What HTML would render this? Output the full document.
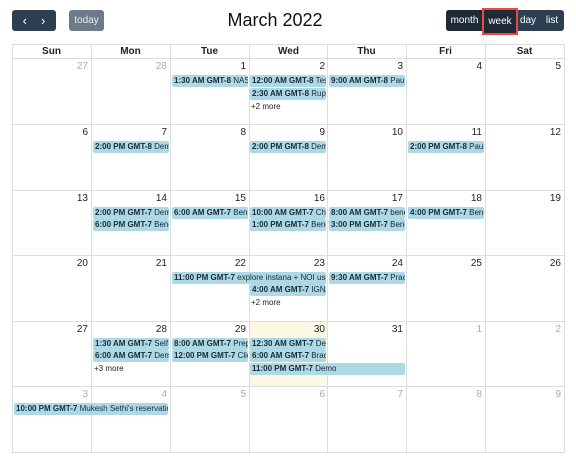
<!DOCTYPE html><html><head><style>
body{margin:0;width:576px;height:464px;background:#fff;font-family:"Liberation Sans",sans-serif;position:relative;overflow:hidden}
.a{position:absolute}
.btn{position:absolute;color:#fff;font-size:10px;display:flex;align-items:center;justify-content:center}
.v{position:absolute;top:44px;width:1px;height:409px;background:#ddd}
.h{position:absolute;left:12px;width:553px;height:1px;background:#ddd}
.hd{position:absolute;top:46px;font-size:10px;font-weight:bold;color:#222;text-align:center;width:79px}
.n{position:absolute;font-size:10px;color:#222;text-align:right;width:74px}
.g{color:#aaa}
.e{position:absolute;height:12px;background:#add8e6;border-radius:2px;font-size:8px;line-height:12px;color:#1a2a33;white-space:nowrap;overflow:hidden;padding-left:2px;box-sizing:border-box}
.e b{font-weight:bold}
.m{position:absolute;font-size:8px;color:#222}
</style></head><body>
<div class="btn" style="left:12px;top:10px;width:44px;height:21px;background:#2c3e50;border-radius:3px;font-size:13px"><span style="margin-right:14px">&#8249;</span><span>&#8250;</span></div>
<div class="btn" style="left:69px;top:10px;width:35px;height:21px;background:#6c7a89;border-radius:3px;color:#eee">today</div>
<div class="a" style="left:0;width:550px;top:10px;text-align:center;font-size:18px;color:#111">March 2022</div>
<div class="btn" style="left:446px;top:10px;width:118px;height:21px;background:#2c3e50;border-radius:3px"></div>
<div class="btn" style="left:446px;top:10px;width:37px;height:21px;background:#1e2b37;border-radius:3px 0 0 3px">month</div>
<div class="btn" style="left:482px;top:8px;width:32px;height:23px;border:2px solid #e74c3c;background:#1e2b37">week</div>
<div class="btn" style="left:518px;top:10px;width:20px;height:21px">day</div>
<div class="btn" style="left:542px;top:10px;width:20px;height:21px">list</div>
<div class="a" style="left:249px;top:321px;width:78px;height:65px;background:#fcf8e3"></div>
<div class="v" style="left:12px"></div><div class="v" style="left:91px"></div><div class="v" style="left:170px"></div><div class="v" style="left:249px"></div><div class="v" style="left:327px"></div><div class="v" style="left:406px"></div><div class="v" style="left:485px"></div><div class="v" style="left:564px"></div>
<div class="h" style="top:44px"></div><div class="h" style="top:58px"></div><div class="h" style="top:124px"></div><div class="h" style="top:190px"></div><div class="h" style="top:255px"></div><div class="h" style="top:321px"></div><div class="h" style="top:386px"></div><div class="h" style="top:452px"></div>
<div class="hd" style="left:12px">Sun</div><div class="hd" style="left:91px">Mon</div><div class="hd" style="left:170px">Tue</div><div class="hd" style="left:249px">Wed</div><div class="hd" style="left:327px">Thu</div><div class="hd" style="left:406px">Fri</div><div class="hd" style="left:485px">Sat</div>
<div class="n g" style="left:14px;top:61px">27</div><div class="n g" style="left:93px;top:61px">28</div><div class="n" style="left:172px;top:61px">1</div><div class="n" style="left:251px;top:61px">2</div><div class="n" style="left:329px;top:61px">3</div><div class="n" style="left:408px;top:61px">4</div><div class="n" style="left:487px;top:61px">5</div>
<div class="n" style="left:14px;top:127px">6</div><div class="n" style="left:93px;top:127px">7</div><div class="n" style="left:172px;top:127px">8</div><div class="n" style="left:251px;top:127px">9</div><div class="n" style="left:329px;top:127px">10</div><div class="n" style="left:408px;top:127px">11</div><div class="n" style="left:487px;top:127px">12</div>
<div class="n" style="left:14px;top:193px">13</div><div class="n" style="left:93px;top:193px">14</div><div class="n" style="left:172px;top:193px">15</div><div class="n" style="left:251px;top:193px">16</div><div class="n" style="left:329px;top:193px">17</div><div class="n" style="left:408px;top:193px">18</div><div class="n" style="left:487px;top:193px">19</div>
<div class="n" style="left:14px;top:258px">20</div><div class="n" style="left:93px;top:258px">21</div><div class="n" style="left:172px;top:258px">22</div><div class="n" style="left:251px;top:258px">23</div><div class="n" style="left:329px;top:258px">24</div><div class="n" style="left:408px;top:258px">25</div><div class="n" style="left:487px;top:258px">26</div>
<div class="n" style="left:14px;top:324px">27</div><div class="n" style="left:93px;top:324px">28</div><div class="n" style="left:172px;top:324px">29</div><div class="n" style="left:251px;top:324px">30</div><div class="n" style="left:329px;top:324px">31</div><div class="n g" style="left:408px;top:324px">1</div><div class="n g" style="left:487px;top:324px">2</div>
<div class="n g" style="left:14px;top:389px">3</div><div class="n g" style="left:93px;top:389px">4</div><div class="n g" style="left:172px;top:389px">5</div><div class="n g" style="left:251px;top:389px">6</div><div class="n g" style="left:329px;top:389px">7</div><div class="n g" style="left:408px;top:389px">8</div><div class="n g" style="left:487px;top:389px">9</div>
<div class="e" style="left:172px;top:75px;width:76px"><b>1:30 AM GMT-8</b> NASSCOM</div>
<div class="e" style="left:250px;top:75px;width:76px"><b>12:00 AM GMT-8</b> Test</div>
<div class="e" style="left:250px;top:88px;width:76px"><b>2:30 AM GMT-8</b> Rupesh</div>
<div class="m" style="left:251px;top:102px">+2 more</div>
<div class="e" style="left:329px;top:75px;width:76px"><b>9:00 AM GMT-8</b> Paulo</div>
<div class="e" style="left:93px;top:141px;width:76px"><b>2:00 PM GMT-8</b> Demo</div>
<div class="e" style="left:250px;top:141px;width:76px"><b>2:00 PM GMT-8</b> Demo</div>
<div class="e" style="left:408px;top:141px;width:76px"><b>2:00 PM GMT-8</b> Paulo</div>
<div class="e" style="left:93px;top:207px;width:76px"><b>2:00 PM GMT-7</b> Demo</div>
<div class="e" style="left:93px;top:219px;width:76px"><b>6:00 PM GMT-7</b> Benefit</div>
<div class="e" style="left:172px;top:207px;width:76px"><b>6:00 AM GMT-7</b> Benefit</div>
<div class="e" style="left:250px;top:207px;width:76px"><b>10:00 AM GMT-7</b> Check</div>
<div class="e" style="left:250px;top:219px;width:76px"><b>1:00 PM GMT-7</b> Benefit</div>
<div class="e" style="left:329px;top:207px;width:76px"><b>8:00 AM GMT-7</b> benefit</div>
<div class="e" style="left:329px;top:219px;width:76px"><b>3:00 PM GMT-7</b> Benefit</div>
<div class="e" style="left:408px;top:207px;width:76px"><b>4:00 PM GMT-7</b> Benefit</div>
<div class="e" style="left:172px;top:272px;width:154px"><b>11:00 PM GMT-7</b> explore instana + NOI use cases</div>
<div class="e" style="left:329px;top:272px;width:76px"><b>9:30 AM GMT-7</b> Practice</div>
<div class="e" style="left:250px;top:284px;width:76px"><b>4:00 AM GMT-7</b> IGNAT</div>
<div class="m" style="left:251px;top:298px">+2 more</div>
<div class="e" style="left:93px;top:338px;width:76px"><b>1:30 AM GMT-7</b> Self Enroll</div>
<div class="e" style="left:93px;top:350px;width:76px"><b>6:00 AM GMT-7</b> Demo</div>
<div class="m" style="left:94px;top:364px">+3 more</div>
<div class="e" style="left:172px;top:338px;width:76px"><b>8:00 AM GMT-7</b> Prep</div>
<div class="e" style="left:172px;top:350px;width:76px"><b>12:00 PM GMT-7</b> Client</div>
<div class="e" style="left:250px;top:338px;width:76px"><b>12:30 AM GMT-7</b> Demo</div>
<div class="e" style="left:250px;top:350px;width:76px"><b>6:00 AM GMT-7</b> Bradley</div>
<div class="e" style="left:250px;top:363px;width:155px"><b>11:00 PM GMT-7</b> Demo</div>
<div class="e" style="left:14px;top:403px;width:154px"><b>10:00 PM GMT-7</b> Mukesh Sethi's reservation.</div>
</body></html>
